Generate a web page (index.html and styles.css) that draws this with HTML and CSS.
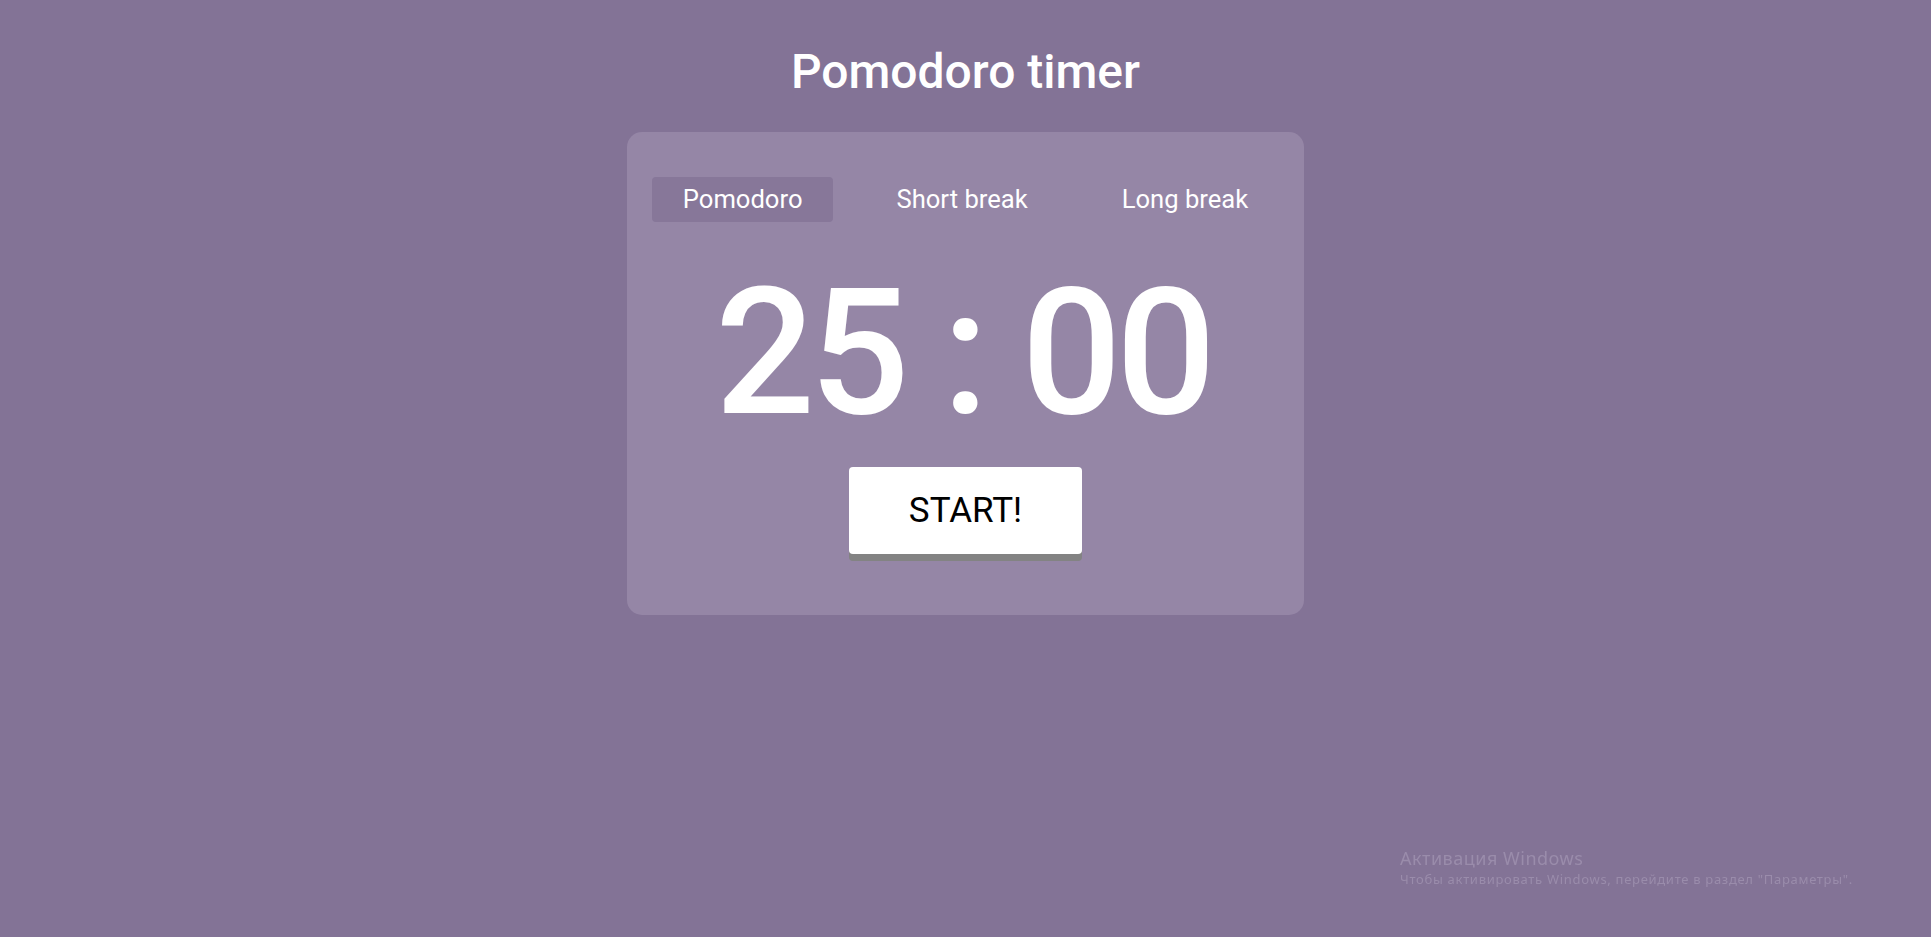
FILE: index.html
```html
<!DOCTYPE html>
<html lang="en">
<head>
<meta charset="utf-8">
<title>Pomodoro timer</title>
<link rel="stylesheet" href="styles.css">
</head>
<body>
<main class="page">
  <h1 class="title">Pomodoro timer</h1>
  <section class="card">
    <nav class="tabs">
      <button class="tab tab-active">Pomodoro</button>
      <button class="tab">Short break</button>
      <button class="tab">Long break</button>
    </nav>
    <div class="time">25 : 00</div>
    <button class="start">START!</button>
  </section>
</main>
<div class="watermark">
  <div class="wm-title">Активация Windows</div>
  <div class="wm-text">Чтобы активировать Windows, перейдите в раздел "Параметры".</div>
</div>
</body>
</html>
```

FILE: styles.css
```css
html, body {
  margin: 0;
  padding: 0;
}
body {
  background: #837396;
  font-family: Roboto, "Liberation Sans", sans-serif;
  color: #ffffff;
  min-height: 937px;
}
.page {
  display: flex;
  flex-direction: column;
  align-items: center;
  padding-top: 43px;
}
.title {
  margin: 0 0 32px;
  font-size: 48px;
  line-height: 57px;
  font-weight: 500;
}
.card {
  width: 677px;
  box-sizing: border-box;
  background: #9586a6;
  border-radius: 15px;
  padding: 45px 20px 61px;
  display: flex;
  flex-direction: column;
  align-items: center;
}
.tabs {
  display: flex;
  gap: 32px;
  justify-content: center;
  white-space: nowrap;
}
.tab {
  flex-shrink: 0;
  white-space: nowrap;
  border: none;
  background: transparent;
  color: #ffffff;
  font-family: Roboto, "Liberation Sans", sans-serif;
  font-size: 25.6px;
  line-height: 45px;
  height: 45px;
  padding: 0 31px;
  border-radius: 4px;
  cursor: pointer;
}
.tab-active {
  background: #877799;
}
.time {
  margin-top: 43px;
  font-size: 176px;
  line-height: 176px;
  font-weight: 500;
  letter-spacing: -5.5px;
  padding-right: 5.5px;
  white-space: nowrap;
}
.start {
  margin-top: 26px;
  width: 233px;
  height: 87px;
  border: none;
  border-radius: 4px;
  background: #ffffff;
  color: #000000;
  font-family: Roboto, "Liberation Sans", sans-serif;
  font-size: 35px;
  line-height: 87px;
  padding: 0;
  box-shadow: 0 7px 0 #838383;
  cursor: pointer;
}
.watermark {
  position: fixed;
  left: 1400px;
  top: 846px;
  color: #9a8cab;
  font-family: "Noto Sans", "Open Sans", sans-serif;
  white-space: nowrap;
}
.wm-title {
  font-size: 18px;
  line-height: 24px;
  letter-spacing: 0.5px;
}
.wm-text {
  font-size: 13px;
  line-height: 18px;
  letter-spacing: 0.7px;
}
```
